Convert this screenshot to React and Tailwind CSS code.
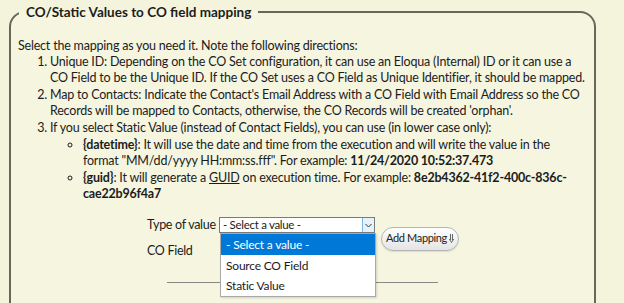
import React from "react";

export default function App() {
  return (
    <div
      className="w-[624px] h-[303px] overflow-hidden bg-[#f4f4dd] text-[#1c1c1c] pt-[2px] pl-[9px] pr-[28px]"
      style={{ fontFamily: "Lato, 'Open Sans', sans-serif" }}
    >
      <fieldset className="border-2 border-[#67675a] rounded-t-[16px] bg-[#f5f5e0] pl-[7px] pr-[8px] pt-[16px] h-[340px] min-w-0">
        <legend className="ml-[1px] px-[7px] text-[13.5px] font-bold leading-[20px]">
          CO/Static Values to CO field mapping
        </legend>

        <div className="text-[12.5px] leading-[16px] tracking-[-0.2px] whitespace-nowrap">
          <p>Select the mapping as you need it. Note the following directions:</p>
          <ol className="list-decimal pl-[32px]">
            <li>
              Unique ID: Depending on the CO Set configuration, it can use an Eloqua (Internal) ID or it can use a
              <br />
              CO Field to be the Unique ID. If the CO Set uses a CO Field as Unique Identifier, it should be mapped.
            </li>
            <li className="mt-[1px]">
              Map to Contacts: Indicate the Contact's Email Address with a CO Field with Email Address so the CO
              <br />
              Records will be mapped to Contacts, otherwise, the CO Records will be created 'orphan'.
            </li>
            <li className="mt-[1px]">
              If you select Static Value (instead of Contact Fields), you can use (in lower case only):
              <ul className="list-[circle] pl-[33px]">
                <li className="mt-[1px]">
                  <b>{"{datetime}"}</b>: It will use the date and time from the execution and will write the value in the
                  <br />
                  format "MM/dd/yyyy HH:mm:ss.fff". For example: <b>11/24/2020 10:52:37.473</b>
                </li>
                <li className="mt-[1px]">
                  <b>{"{guid}"}</b>: It will generate a <span className="underline">GUID</span> on execution time. For
                  example: <b>8e2b4362-41f2-400c-836c-</b>
                  <br />
                  <b>cae22b96f4a7</b>
                </li>
              </ul>
            </li>
          </ol>
        </div>

        <div className="mt-[15px] ml-[129px] flex items-center text-[12.5px] tracking-[-0.3px] whitespace-nowrap">
          <div className="flex flex-col gap-[10px]">
            <div className="flex items-center h-[16px]">
              <span className="w-[72px]">Type of value</span>
              <div className="relative w-[156px] h-[16px] bg-white border border-[#7a7a7a] flex items-center">
                <span className="pl-[3px] text-[11.5px] leading-none">- Select a value -</span>
                <span className="absolute right-0 top-0 bottom-0 w-[12px] bg-[#e5f1fb] border-l border-[#7eb4ea] flex items-center justify-center">
                  <svg width="7" height="5" viewBox="0 0 7 5">
                    <path d="M0.5 1 L3.5 4 L6.5 1" fill="none" stroke="#333" strokeWidth="1" />
                  </svg>
                </span>
                <div className="absolute left-0 top-[15px] w-[156px] bg-white border border-[#a9a9a9] shadow-[1px_1px_2px_rgba(0,0,0,0.15)] z-10 text-[12px] tracking-[-0.2px]">
                  <div className="h-[21px] bg-[#0078d7] text-white flex items-center pl-[5px]">- Select a value -</div>
                  <div className="h-[21px] flex items-center pl-[5px]">Source CO Field</div>
                  <div className="h-[20px] flex items-center pl-[5px]">Static Value</div>
                </div>
              </div>
            </div>
            <div className="flex items-center h-[16px]">
              <span className="w-[73px]">CO Field</span>
              <div className="w-[156px] h-[16px] bg-white border border-[#7a7a7a]" />
            </div>
          </div>
          <button className="ml-[5px] mt-[1px] h-[24px] w-[78px] flex items-center justify-center gap-[2px] rounded-full border border-[#b4b4b4] bg-gradient-to-b from-white to-[#e4e4e4] text-[11px] tracking-[-0.35px] text-[#222] shadow-[0_1px_1px_rgba(0,0,0,0.1)]">
            Add Mapping
            <svg width="5" height="9" viewBox="0 0 5 9">
              <path d="M1.5 0 V6 M3.5 0 V6 M0.3 5 L2.5 8.5 L4.7 5" fill="none" stroke="#555" strokeWidth="0.9" />
            </svg>
          </button>
        </div>

        <div className="mt-[23px] ml-[149px] w-[271px] h-px bg-[#8a8a84]" />
      </fieldset>
    </div>
  );
}
